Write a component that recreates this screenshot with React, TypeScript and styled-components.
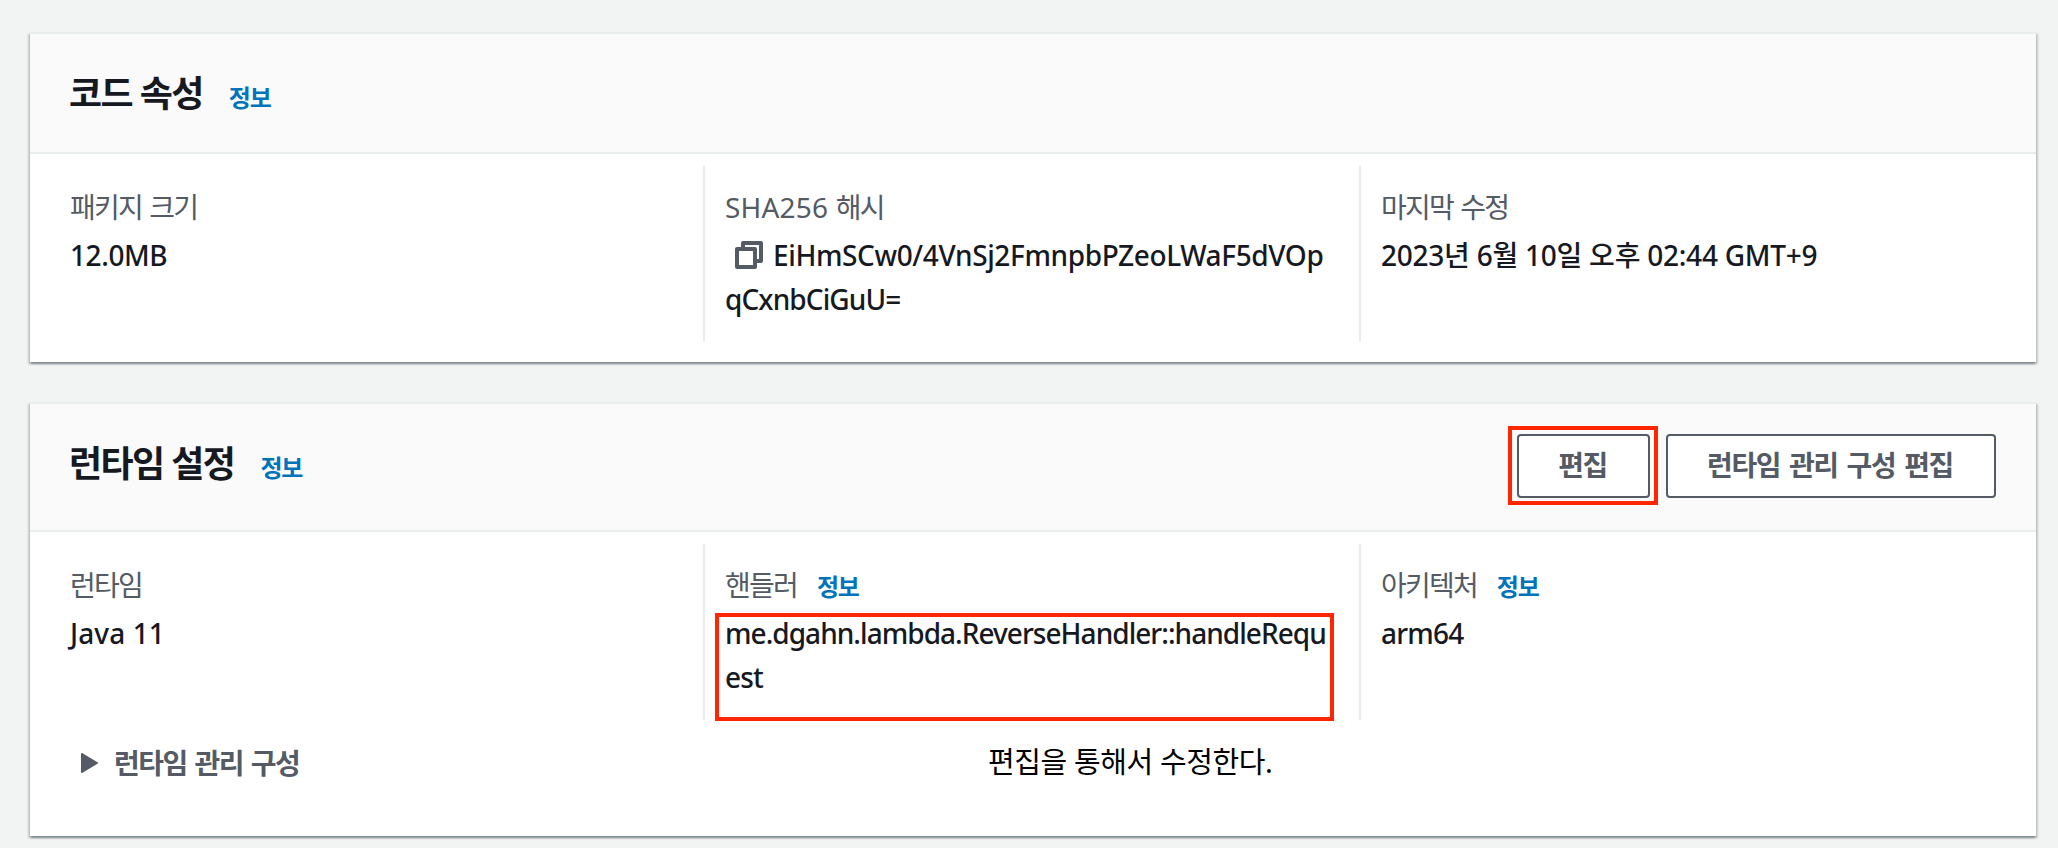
import type { ReactNode } from "react";
import styled, { createGlobalStyle } from "styled-components";

const GlobalStyle = createGlobalStyle`
  * {
    box-sizing: border-box;
  }
  body {
    margin: 0;
    background-color: #f2f3f3;
    color: #16191f;
    font-family: "Noto Sans", "Noto Sans CJK KR", sans-serif;
    font-size: 28px;
    line-height: 44px;
  }
`;
const Page = styled.main`
  height: 848px;
  padding: 32px 22px 0 30px;
  display: flex;
  flex-direction: column;
  gap: 40px;
  overflow: hidden;
`;
const Panel = styled.section<{ $height: number }>`
  height: ${({ $height }) => $height}px;
  flex-shrink: 0;
  background-color: #fff;
  border-top: 2px solid #eaeded;
  box-shadow: 0 2px 2px 0 rgba(0, 28, 36, 0.3),
    2px 2px 2px 0 rgba(0, 28, 36, 0.15), -2px 2px 2px 0 rgba(0, 28, 36, 0.15);
`;
const Header = styled.header<{ $height: number }>`
  height: ${({ $height }) => $height}px;
  padding: 30px 40px 0 39px;
  display: flex;
  justify-content: space-between;
  align-items: flex-start;
  background-color: #fafafa;
  border-bottom: 2px solid #eaeded;
`;
const Heading = styled.div`
  display: flex;
  align-items: baseline;
  gap: 26px;
  padding-top: 2px;
`;
const Title = styled.h2`
  margin: 0;
  font-size: 36px;
  font-weight: 700;
  line-height: 56px;
  letter-spacing: -1.6px;
`;
const InfoLink = styled.a`
  color: #0073bb;
  font-size: 24px;
  font-weight: 700;
  line-height: 36px;
  letter-spacing: -1.2px;
  text-decoration: none;
`;
const Actions = styled.div`
  display: flex;
  gap: 16px;
`;
const Button = styled.button<{ $width: number }>`
  position: relative;
  width: ${({ $width }) => $width}px;
  height: 64px;
  padding: 0 2px 2px 0;
  background-color: #fff;
  border: 2px solid #545b64;
  border-radius: 4px;
  color: #545b64;
  font: inherit;
  font-weight: 700;
  letter-spacing: -1.4px;
  word-spacing: 3px;
  white-space: nowrap;
`;
const Columns = styled.div`
  display: grid;
  grid-template-columns: 673px 656px 1fr;
  padding-top: 12px;
`;
const Column = styled.div<{ $first?: boolean }>`
  height: 176px;
  padding: 19px 0 0 ${({ $first }) => ($first ? 40 : 20)}px;
  border-left: ${({ $first }) => ($first ? "none" : "2px solid #eaeded")};
`;
const Label = styled.div`
  display: flex;
  align-items: baseline;
  gap: 20px;
  height: 44px;
  margin-bottom: 4px;
  color: #545b64;
  letter-spacing: -1.8px;
  word-spacing: 2px;
`;
const Latin = styled.span`
  letter-spacing: 0.2px;
`;
const Value = styled.div`
  position: relative;
  width: 618px;
  font-weight: 500;
  white-space: nowrap;
`;
const Line = styled.span<{ $spacing?: number }>`
  display: block;
  letter-spacing: ${({ $spacing = 0 }) => $spacing}px;
`;
const CopyIcon = styled.svg`
  width: 28px;
  height: 28px;
  margin: 0 10px;
  vertical-align: -3px;
`;
// red frame drawn over the part it points at
const Mark = styled.span<{ $inset: string }>`
  position: absolute;
  inset: ${({ $inset }) => $inset};
  border: 4px solid #ff2600;
  pointer-events: none;
`;
const Footer = styled.div`
  display: grid;
  grid-template-columns: 958px 1fr;
  align-items: center;
  padding-top: 19px;
`;
const Expander = styled.div`
  display: flex;
  align-items: center;
  gap: 16px;
  padding: 2px 0 0 51px;
  color: #545b64;
  font-weight: 700;
  letter-spacing: -1.5px;
  word-spacing: 2px;
`;
const Arrow = styled.svg`
  width: 17px;
  height: 20px;
`;
const Note = styled.p`
  margin: 0;
  color: #000;
  font-size: 29px;
  letter-spacing: -0.4px;
`;

const Info = () => <InfoLink>정보</InfoLink>;

const Field = ({
  label,
  info,
  first,
  children,
}: {
  label: ReactNode;
  info?: boolean;
  first?: boolean;
  children: ReactNode;
}) => (
  <Column $first={first}>
    <Label>
      <span>{label}</span>
      {info && <Info />}
    </Label>
    <Value>{children}</Value>
  </Column>
);

const App = () => {
  return (
    <Page>
      <GlobalStyle />
      <Panel $height={330}>
        <Header $height={120}>
          <Heading>
            <Title>코드 속성</Title>
            <Info />
          </Heading>
        </Header>
        <Columns>
          <Field label="패키지 크기" first>
            <Line $spacing={-0.4}>12.0MB</Line>
          </Field>
          <Field
            label={
              <>
                <Latin>SHA256</Latin> 해시
              </>
            }
          >
            <Line $spacing={-0.38}>
              <CopyIcon viewBox="0 0 28 28" fill="none" stroke="#545b64">
                <path
                  d="M8 7V2h18v18h-5M2 8h18v18H2z"
                  strokeWidth="4"
                  strokeLinejoin="round"
                />
              </CopyIcon>
              EiHmSCw0/4VnSj2FmnpbPZeoLWaF5dVOp
            </Line>
            <Line $spacing={-0.9}>qCxnbCiGuU=</Line>
          </Field>
          <Field label="마지막 수정">
            <Line $spacing={-0.24}>2023년 6월 10일 오후 02:44 GMT+9</Line>
          </Field>
        </Columns>
      </Panel>

      <Panel $height={434}>
        <Header $height={128}>
          <Heading>
            <Title>런타임 설정</Title>
            <Info />
          </Heading>
          <Actions>
            <Button $width={133}>
              편집
              <Mark $inset="-10px -10px -9px -11px" />
            </Button>
            <Button $width={330}>런타임 관리 구성 편집</Button>
          </Actions>
        </Header>
        <Columns>
          <Field label="런타임" first>
            <Line $spacing={0.1}>Java 11</Line>
          </Field>
          <Field label="핸들러" info>
            <Line $spacing={-0.96}>
              me.dgahn.lambda.ReverseHandler::handleRequ
            </Line>
            <Line $spacing={-0.8}>est</Line>
            <Mark $inset="2px 9px -22px -10px" />
          </Field>
          <Field label="아키텍처" info>
            <Line $spacing={-0.8}>arm64</Line>
          </Field>
        </Columns>
        <Footer>
          <Expander>
            <Arrow viewBox="0 0 17 20">
              <path
                d="M1 1v18l15-9z"
                fill="#545b64"
                stroke="#545b64"
                strokeWidth="2"
                strokeLinejoin="round"
              />
            </Arrow>
            런타임 관리 구성
          </Expander>
          <Note>편집을 통해서 수정한다.</Note>
        </Footer>
      </Panel>
    </Page>
  );
};

export default App;
